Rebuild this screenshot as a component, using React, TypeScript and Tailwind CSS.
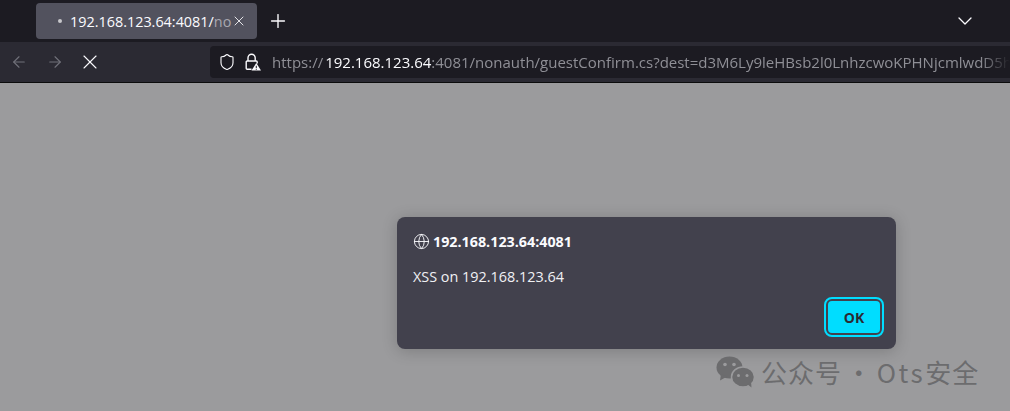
import { ArrowLeft, ArrowRight, ChevronDown, Globe, Plus, Shield, X } from "lucide-react";

const uiFont = "font-['Open_Sans','Noto_Sans',sans-serif]";

function LockWarning() {
  return (
    <svg width="16" height="18" viewBox="0 0 16 18" fill="none" className="shrink-0">
      <path d="M3 8V4.800a3.600 3.600 0 0 1 7.200 0V8" stroke="#fbfbfe" strokeWidth="1.400" />
      <path d="M6.500 16.300H2.200A1 1 0 0 1 1.200 15.300V9a1 1 0 0 1 1-1h9a1 1 0 0 1 1 1v1.500" stroke="#fbfbfe" strokeWidth="1.400" />
      <path d="M11.300 10l4.700 7.500H6.500z" fill="#fbfbfe" />
      <path d="M11.300 12.800v2.500M11.300 15.900v.9" stroke="#2b2a33" strokeWidth="1.100" />
    </svg>
  );
}

function WeChatMark() {
  return (
    <svg width="38" height="32" viewBox="0 0 38 32" className="shrink-0">
      <ellipse cx="13.500" cy="11.500" rx="13" ry="11" fill="#6c6c6e" />
      <path d="M5 18l-1 6.500 7-4z" fill="#6c6c6e" />
      <ellipse cx="27" cy="21" rx="11.500" ry="10" fill="#6c6c6e" stroke="#9b9b9d" strokeWidth="1.500" />
      <path d="M31 28l4.500 3.500-.5-6z" fill="#6c6c6e" />
      <circle cx="9" cy="8.500" r="1.800" fill="#9b9b9d" />
      <circle cx="18" cy="8.500" r="1.800" fill="#9b9b9d" />
      <circle cx="22.500" cy="19.500" r="1.500" fill="#9b9b9d" />
      <circle cx="31" cy="19.500" r="1.500" fill="#9b9b9d" />
    </svg>
  );
}

export default function App() {
  return (
    <div className={`relative flex h-[411px] w-[1010px] flex-col overflow-hidden bg-[#9b9b9d] ${uiFont}`}>
      {/* tab strip */}
      <div className="flex h-[42px] shrink-0 items-center bg-[#1c1b22] pl-[36px] pr-[33px]">
        <div className="flex h-[36px] w-[221px] items-center rounded-[4px] bg-[#52525e] pl-[22px] text-[#fbfbfe]">
          <span className="mr-[8px] h-[4px] w-[4px] shrink-0 rounded-full bg-[#c8c8cc]" />
          <span className="mt-[1px] shrink-0 whitespace-nowrap text-[14.4px]">
            192.168.123.64:4081/<span className="text-[#a8a8b0]">no</span>
          </span>
          <X size={16} strokeWidth={1.3} className="ml-auto mr-[10px] mb-[1px] shrink-0" />
        </div>
        <Plus size={22} strokeWidth={1.5} className="ml-[10px] text-[#fbfbfe]" />
        <ChevronDown size={24} strokeWidth={1.3} className="ml-auto text-[#fbfbfe]" />
      </div>

      {/* toolbar */}
      <div className="flex h-[41px] shrink-0 items-center border-b border-[#0c0c0d] bg-[#2b2a33] pl-[10px]">
        <ArrowLeft size={18} strokeWidth={1.5} className="text-[#71717a]" />
        <ArrowRight size={18} strokeWidth={1.5} className="ml-[18px] text-[#71717a]" />
        <X size={24} strokeWidth={1.1} className="ml-[14px] text-[#fbfbfe]" />
        <div className="ml-[108px] flex h-[32px] min-w-0 flex-1 items-center overflow-hidden rounded-l-[4px] bg-[#1c1b22] pl-[8px]">
          <Shield size={18} strokeWidth={1.5} className="shrink-0 text-[#fbfbfe]" />
          <span className="ml-[9px]"><LockWarning /></span>
          <span className="ml-[11px] min-w-0 flex-1 overflow-hidden whitespace-nowrap text-[15px] text-[#8f8f96] [mask-image:linear-gradient(to_right,black_96%,transparent)]">
            https://<span className="ml-[2px] text-[#fbfbfe]">192.168.123.64</span>:4081/nonauth/guestConfirm.cs?dest=d3M6Ly9leHBsb2l0LnhzcwoKPHNjcmlwdD5h
          </span>
        </div>
      </div>

      {/* page area */}
      <div className="flex-1 pl-[397px] pt-[134px]">
        <div className="flex h-[132px] w-[499px] flex-col rounded-[8px] bg-[#42414d] pb-[16px] pl-[16px] pr-[16px] pt-[14px] shadow-[0_2px_16px_rgba(0,0,0,0.2)]">
          <div className="flex items-center gap-[3px] text-[#fbfbfe]">
            <Globe size={17} strokeWidth={1.3} />
            <span className="text-[14.3px] font-bold">192.168.123.64:4081</span>
          </div>
          <p className="mt-[16px] text-[14.4px] leading-[18px] text-[#f0f0f4]">XSS on 192.168.123.64</p>
          <div className="mt-auto flex justify-end">
            <button className="h-[32px] w-[52px] rounded-[4px] bg-[#00ddff] text-[14px] font-bold text-[#2b2a33] outline-2 outline-offset-2 outline-[#00ddff]">
              OK
            </button>
          </div>
        </div>
      </div>

      {/* watermark */}
      <div className="absolute left-[716px] top-[355px] flex items-center gap-[7px] text-[#6c6c6e]">
        <WeChatMark />
        <span className="whitespace-nowrap text-[26px] leading-[34px] tracking-[1px] [word-spacing:-3px] font-['Noto_Sans_CJK_SC',sans-serif]">
          公众号 · <span className="tracking-[2.5px]">Ots</span>安全
        </span>
      </div>
    </div>
  );
}
